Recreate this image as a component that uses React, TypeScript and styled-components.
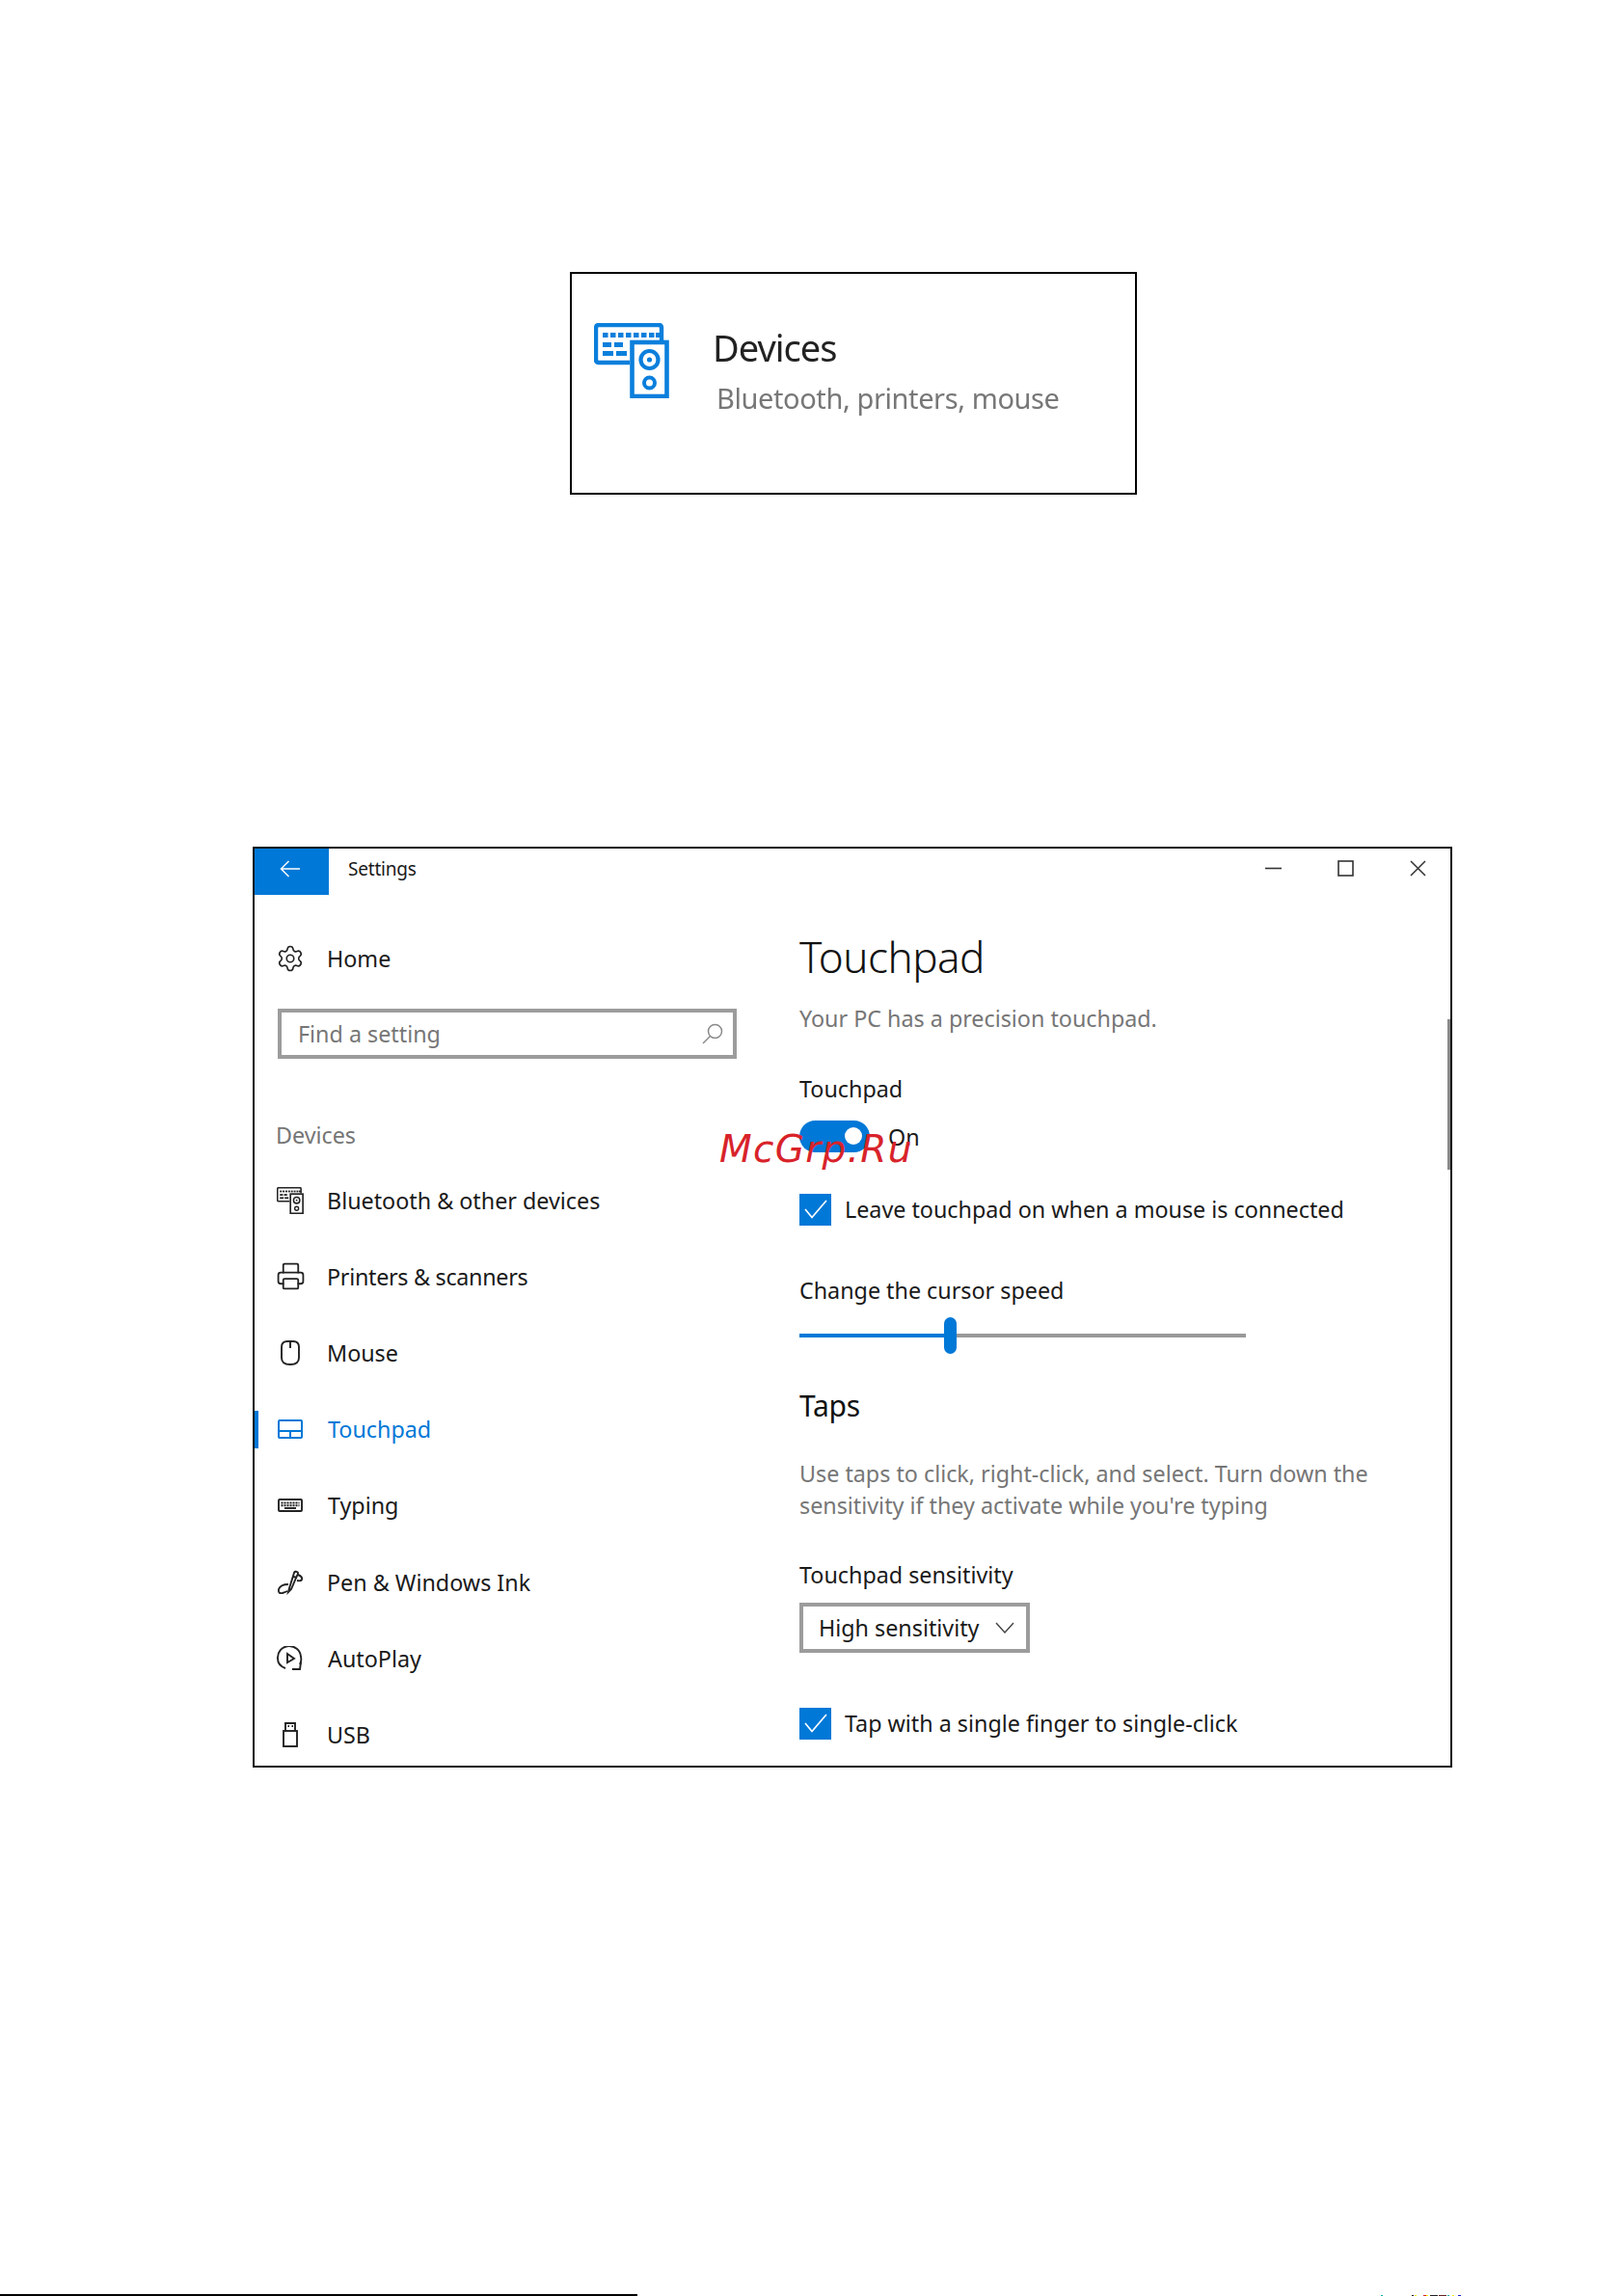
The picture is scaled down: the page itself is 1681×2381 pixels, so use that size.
import React from "react";
import styled, { createGlobalStyle } from "styled-components";
import { Settings, Printer } from "lucide-react";

const Global = createGlobalStyle`
  html, body { margin: 0; padding: 0; background: #fff; }
  body { font-family: "Noto Sans", "Open Sans", Arial, sans-serif; color: #1a1a1a; }
  * { box-sizing: border-box; }
`;

const Page = styled.div`
  position: relative;
  width: 1681px;
  height: 2381px;
  overflow: hidden;
  padding-top: 282px;
  display: flex;
  flex-direction: column;
`;

const Card = styled.section`
  width: 588px;
  height: 231px;
  margin-left: 591px;
  border: 2px solid #000;
  padding: 51px 0 0 23px;
  display: flex;
  align-items: flex-start;
  gap: 45px;
`;
const CardIcon = styled.div`
  width: 78px;
  height: 78px;
  filter: blur(0.6px);
  flex: none;
`;
const CardText = styled.div`
  display: flex;
  flex-direction: column;
  filter: blur(0.6px);
`;
const CardTitle = styled.div`
  font-size: 38px;
  line-height: 50px;
  color: #222;
  letter-spacing: -1px;
`;
const CardSub = styled.div`
  font-size: 29px;
  line-height: 40px;
  margin: 8px 0 0 4px;
  color: #777;
  letter-spacing: -0.4px;
`;

const Win = styled.section`
  position: relative;
  width: 1244px;
  height: 955px;
  margin: 365px 0 0 262px;
  border: 2px solid #111;
  overflow: hidden;
  flex: none;
`;
const TitleBar = styled.header`
  height: 48px;
  display: flex;
  align-items: center;
`;
const BackButton = styled.div`
  width: 77px;
  height: 48px;
  background: #0078d7;
  display: flex;
  align-items: center;
  justify-content: center;
  padding: 0 4px 7px 0;
`;
const WinTitle = styled.div`
  font-size: 19px;
  margin: -6px 0 0 20px;
  flex: 1;
  letter-spacing: -0.2px;
`;
const WinControls = styled.div`
  display: flex;
  padding-right: 25px;
  gap: 58px;
  margin-top: -7px;
`;
const Ctl = styled.svg`
  width: 17px;
  height: 17px;
  display: block;
`;

const Columns = styled.div`
  display: flex;
`;
const Sidebar = styled.nav`
  width: 565px;
  flex: none;
  padding: 39px 0 0 23px;
`;
const Row = styled.div<{ $active?: boolean; $h?: number }>`
  position: relative;
  height: ${(p) => p.$h ?? 79.2}px;
  display: flex;
  align-items: center;
  font-size: 23.3px;
  color: ${(p) => (p.$active ? "#0078d7" : "#1a1a1a")};
  ${(p) =>
    p.$active &&
    `&::before{content:"";position:absolute;left:-23px;top:20px;width:4px;height:39px;background:#0078d7;}`}
`;
const IconSlot = styled.span<{ $color?: string }>`
  width: 28px;
  height: 28px;
  margin-right: 24px;
  display: flex;
  align-items: center;
  justify-content: center;
  flex: none;
  color: ${(p) => p.$color ?? "#222"};
  svg { display: block; flex: none; }
`;
const RowLabel = styled.span<{ $shift?: boolean; $tight?: boolean }>`
  margin-left: ${(p) => (p.$shift ? 1 : 0)}px;
  letter-spacing: ${(p) => (p.$tight ? "-0.28px" : "0")};
`;
const Search = styled.div`
  width: 476px;
  height: 52px;
  margin: 25px 0 0 1px;
  border: 4px solid #9c9c9c;
  display: flex;
  align-items: center;
  justify-content: space-between;
  padding: 0 10px 0 17px;
  font-size: 23.3px;
  color: #767676;
`;
const GroupLabel = styled.div`
  height: 40px;
  line-height: 40px;
  margin: 59px 0 8px -1px;
  font-size: 23.3px;
  color: #767676;
`;

const Main = styled.main`
  flex: 1;
  padding-top: 34px;
`;
const PageTitle = styled.h1`
  margin: 0;
  font-size: 44px;
  font-weight: 300;
  line-height: 60px;
  letter-spacing: -0.5px;
  color: #111;
`;
const Hint = styled.p<{ $top: number }>`
  margin: ${(p) => p.$top}px 0 0;
  font-size: 23.3px;
  line-height: 33.5px;
  color: #767676;
  width: 640px;
`;
const Label = styled.div<{ $top: number }>`
  margin-top: ${(p) => p.$top}px;
  font-size: 23.3px;
  line-height: 34px;
  color: #1a1a1a;
`;
const ToggleRow = styled.div`
  margin-top: 16px;
  height: 33px;
  display: flex;
  align-items: center;
  gap: 19px;
  font-size: 23.3px;
`;
const ToggleTrack = styled.div`
  width: 73px;
  height: 33px;
  border-radius: 17px;
  background: #0078d7;
  display: flex;
  align-items: center;
  justify-content: flex-end;
  padding-right: 8px;
`;
const ToggleKnob = styled.div`
  width: 18px;
  height: 18px;
  border-radius: 50%;
  background: #fff;
`;
const OnText = styled.span`
  margin-top: 2px;
`;
const CheckRow = styled.div<{ $top: number }>`
  margin-top: ${(p) => p.$top}px;
  height: 33px;
  display: flex;
  align-items: center;
  gap: 14px;
  font-size: 23.3px;
`;
const CheckBox = styled.div`
  width: 33px;
  height: 33px;
  background: #0078d7;
  display: flex;
  align-items: center;
  justify-content: center;
  flex: none;
`;
const Slider = styled.div`
  margin-top: 11px;
  width: 463px;
  height: 38px;
  display: flex;
  align-items: center;
`;
const SliderFill = styled.div`
  width: 150px;
  height: 4px;
  background: #0078d7;
`;
const SliderThumb = styled.div`
  width: 13px;
  height: 38px;
  border-radius: 7px;
  background: #0078d7;
  flex: none;
`;
const SliderRest = styled.div`
  flex: 1;
  height: 4px;
  background: #999;
`;
const SectionTitle = styled.h2`
  margin: 31px 0 0;
  font-size: 30px;
  font-weight: 400;
  line-height: 46px;
  letter-spacing: -0.3px;
  color: #111;
`;
const Dropdown = styled.div`
  margin-top: 12px;
  width: 239px;
  height: 52px;
  border: 4px solid #9c9c9c;
  display: flex;
  align-items: center;
  justify-content: space-between;
  padding: 0 12px 0 16px;
  font-size: 23.3px;
`;
const ScrollThumb = styled.div`
  position: absolute;
  right: 0;
  top: 177px;
  width: 3px;
  height: 156px;
  background: #8a8a8a;
`;
const Watermark = styled.div`
  position: absolute;
  left: 482px;
  top: 287px;
  font-family: "DejaVu Sans", sans-serif;
  font-style: italic;
  font-size: 39px;
  line-height: 50px;
  letter-spacing: 1.3px;
  color: #d8232a;
  white-space: nowrap;
`;
const BottomRule = styled.div`
  position: absolute;
  left: 0;
  bottom: 0;
  width: 661px;
  height: 2px;
  background: #000;
`;
const Specks = styled.div`
  position: absolute;
  left: 1432px;
  bottom: 0;
  height: 1px;
  width: 249px;
  display: flex;
`;
const Speck = styled.span<{ $w: number; $c: string; $gap: number }>`
  width: ${(p) => p.$w}px;
  height: 1px;
  margin-left: ${(p) => p.$gap}px;
  background: ${(p) => p.$c};
`;

const DevicesGlyph = ({ size, color }: { size: number; color: string }) => (
  <svg width={size} height={size} viewBox="0 0 78 78" fill="none" stroke={color}>
    <path d="M37 41H5Q2 41 2 38V5Q2 2 5 2H67Q70 2 70 5V18" strokeWidth="4.4" />
    <rect x="39.5" y="20" width="36" height="56" strokeWidth="4.6" />
    <circle cx="57.5" cy="38" r="9" strokeWidth="4.2" />
    <circle cx="57.5" cy="38" r="2.6" fill={color} stroke="none" />
    <circle cx="57.5" cy="62" r="5.5" strokeWidth="4" />
    <g fill={color} stroke="none">
      {[9, 17, 25, 33, 41, 49, 57, 64].map((x) => (
        <rect key={x} x={x} y="10" width="5.5" height="5" />
      ))}
      <rect x="9" y="20" width="9" height="5" />
      <rect x="21" y="20" width="9" height="5" />
      <rect x="9" y="29" width="11" height="5" />
      <rect x="23" y="29" width="11" height="5" />
    </g>
  </svg>
);

const Line = { fill: "none", stroke: "currentColor", strokeWidth: 1.9 };

const TouchpadGlyph = () => (
  <svg width="26" height="20" viewBox="0 0 26 20" fill="none" stroke="currentColor" strokeWidth={2}>
    <rect x="1" y="1" width="24" height="18" rx="1" />
    <path d="M1 12H25M13 12V19" />
  </svg>
);
const MouseGlyph = () => (
  <svg width="20" height="26" viewBox="0 0 20 26" {...Line}>
    <path d="M1 7Q1 1 7 1H13Q19 1 19 7V18Q19 25 10 25Q1 25 1 18Z" />
    <path d="M10 1V8" />
  </svg>
);
const KeyboardGlyph = () => (
  <svg width="26" height="14" viewBox="0 0 26 14" {...Line}>
    <rect x="1" y="1" width="24" height="12" rx="1" />
    <path d="M3.5 4.5H22.5M3.5 7.2H22.5" strokeDasharray="2 1" />
    <path d="M7 10H19" />
  </svg>
);
const PenGlyph = () => (
  <svg width="28" height="26" viewBox="0 0 28 26" {...Line}>
    <path d="M13 19L18 3Q19 1 21 2L22 3Q22 5 21 6L15 20L12 23Z" />
    <path d="M17 7L21 8" />
    <path d="M22 5Q27 7 26 10Q25 12 21 11" />
    <path d="M12 15Q4 15 2 20Q1 25 6 24Q9 23 11 22" />
  </svg>
);
const AutoPlayGlyph = () => (
  <svg width="28" height="26" viewBox="0 0 28 26" {...Line}>
    <path d="M9 23Q1 20 1 13A12 12 0 0 1 25 11Q26 15 24 19" />
    <path d="M11 8L18 13L11 17Z" />
    <path d="M25 17L24 24H16" />
  </svg>
);
const UsbGlyph = () => (
  <svg width="16" height="26" viewBox="0 0 16 26" {...Line}>
    <rect x="1" y="9" width="14" height="16" />
    <path d="M3 9V1H13V9" />
    <path d="M5.5 4H7M9.5 4H11" />
  </svg>
);

const nav: { label: string; icon: React.ReactNode; active?: boolean; shift?: boolean; tight?: boolean }[] = [
  { label: "Bluetooth & other devices", icon: <DevicesGlyph size={28} color="#222" /> },
  { label: "Printers & scanners", icon: <Printer size={31} strokeWidth={1.4} />, tight: true },
  { label: "Mouse", icon: <MouseGlyph /> },
  { label: "Touchpad", icon: <TouchpadGlyph />, active: true, shift: true },
  { label: "Typing", icon: <KeyboardGlyph />, shift: true },
  { label: "Pen & Windows Ink", icon: <PenGlyph /> },
  { label: "AutoPlay", icon: <AutoPlayGlyph />, shift: true },
  { label: "USB", icon: <UsbGlyph /> },
];

const Tick = () => (
  <svg width="24" height="20" viewBox="0 0 24 20" fill="none" stroke="#fff" strokeWidth="1.7">
    <path d="M1 10L8 18.5L23 1" />
  </svg>
);

const specks: [number, string, number][] = [
  [2, "#0aa", 0], [2, "#111", 30], [2, "#ee0", 1], [3, "#d22", 7], [2, "#ee0", 0],
  [8, "#222", 2], [8, "#622", 1], [2, "#0aa", 1], [2, "#ee0", 3], [3, "#22c", 4],
];

export default function App() {
  return (
    <Page>
      <Global />
      <Card>
        <CardIcon>
          <DevicesGlyph size={78} color="#0a7fdc" />
        </CardIcon>
        <CardText>
          <CardTitle>Devices</CardTitle>
          <CardSub>Bluetooth, printers, mouse</CardSub>
        </CardText>
      </Card>

      <Win>
        <TitleBar>
          <BackButton>
            <svg width="22" height="18" viewBox="0 0 22 18" fill="none" stroke="#fff" strokeWidth="1.5">
              <path d="M21 9H1.5M9.5 1L1.5 9L9.5 17" />
            </svg>
          </BackButton>
          <WinTitle>Settings</WinTitle>
          <WinControls>
            <Ctl viewBox="0 0 17 17" fill="none" stroke="#333" strokeWidth="1.6">
              <path d="M0 8.5H17" />
            </Ctl>
            <Ctl viewBox="0 0 17 17" fill="none" stroke="#333" strokeWidth="1.6">
              <rect x="1" y="1" width="15" height="15" />
            </Ctl>
            <Ctl viewBox="0 0 17 17" fill="none" stroke="#333" strokeWidth="1.5">
              <path d="M1 1L16 16M16 1L1 16" />
            </Ctl>
          </WinControls>
        </TitleBar>
        <Columns>
          <Sidebar>
            <Row $h={54}>
              <IconSlot>
                <Settings size={30} strokeWidth={1.3} />
              </IconSlot>
              <RowLabel>Home</RowLabel>
            </Row>
            <Search>
              <span>Find a setting</span>
              <svg width="22" height="22" viewBox="0 0 22 22" fill="none" stroke="#8a8a8a" strokeWidth="1.5">
                <circle cx="13.5" cy="8.5" r="7" />
                <path d="M8.5 13.5L1 21" />
              </svg>
            </Search>
            <GroupLabel>Devices</GroupLabel>
            {nav.map((n) => (
              <Row key={n.label} $active={n.active}>
                <IconSlot $color={n.active ? "#0078d7" : undefined}>{n.icon}</IconSlot>
                <RowLabel $shift={n.shift} $tight={n.tight}>{n.label}</RowLabel>
              </Row>
            ))}
          </Sidebar>
          <Main>
            <PageTitle>Touchpad</PageTitle>
            <Hint $top={18}>Your PC has a precision touchpad.</Hint>
            <Label $top={38}>Touchpad</Label>
            <ToggleRow>
              <ToggleTrack>
                <ToggleKnob />
              </ToggleTrack>
              <OnText>On</OnText>
            </ToggleRow>
            <CheckRow $top={43}>
              <CheckBox>
                <Tick />
              </CheckBox>
              Leave touchpad on when a mouse is connected
            </CheckRow>
            <Label $top={50}>Change the cursor speed</Label>
            <Slider>
              <SliderFill />
              <SliderThumb />
              <SliderRest />
            </Slider>
            <SectionTitle>Taps</SectionTitle>
            <Hint $top={31}>
              Use taps to click, right-click, and select. Turn down the sensitivity if they activate while you're typing
            </Hint>
            <Label $top={37}>Touchpad sensitivity</Label>
            <Dropdown>
              High sensitivity
              <svg width="20" height="12" viewBox="0 0 20 12" fill="none" stroke="#444" strokeWidth="1.4">
                <path d="M1 1L10 11L19 1" />
              </svg>
            </Dropdown>
            <CheckRow $top={57}>
              <CheckBox>
                <Tick />
              </CheckBox>
              Tap with a single finger to single-click
            </CheckRow>
          </Main>
        </Columns>
        <ScrollThumb />
        <Watermark>McGrp.Ru</Watermark>
      </Win>

      <BottomRule />
      <Specks>
        {specks.map(([w, c, g], i) => (
          <Speck key={i} $w={w} $c={c} $gap={g} />
        ))}
      </Specks>
    </Page>
  );
}
